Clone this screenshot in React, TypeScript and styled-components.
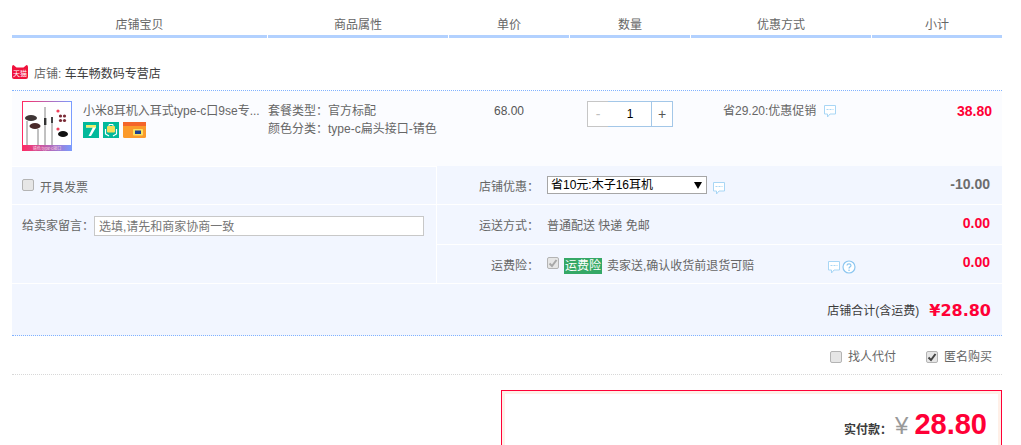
import React from "react";
import styled, { createGlobalStyle } from "styled-components";

const FONT = `"Liberation Sans", "Noto Sans CJK SC", sans-serif`;
const COLS = "255px 180px 120px 120px 180px 130px";
const COLON = "\uFF1A";

const Global = createGlobalStyle`
  html, body { margin: 0; padding: 0; background: #fff; overflow: hidden; }
  body { font: 12px/18px ${FONT}; color: #666; }
  * { box-sizing: border-box; }
`;

const Page = styled.div`
  width: 990px;
  height: 445px;
  margin-left: 12px;
  overflow: hidden;
`;

const HeaderRow = styled.div`
  display: grid;
  grid-template-columns: ${COLS};
  column-gap: 1px;
  height: 38px;
`;
const HeaderCell = styled.div`
  padding-top: 16px;
  height: 38px;
  text-align: center;
  border-bottom: 3px solid #b2d1ff;
`;

const ShopRow = styled.div`
  display: flex;
  align-items: center;
  height: 53px;
  padding-top: 27px;
  padding-bottom: 7px;
  border-bottom: 1px dotted #80b2ff;
`;
const ShopIcon = styled.svg`
  margin-bottom: 4px;
`;
const ShopLabel = styled.span`
  margin-left: 6px;
`;
const ShopName = styled.span`
  color: #3c3c3c;
`;

const ItemRow = styled.div`
  display: grid;
  grid-template-columns: ${COLS};
  column-gap: 1px;
  height: 75px;
  padding-top: 11px;
  background: #fbfcff;
`;
const ItemInfo = styled.div`
  display: flex;
  padding-left: 10px;
  column-gap: 11px;
`;
const ThumbArt = styled.svg`
  flex: none;
  margin-top: -1px;
`;
const ItemText = styled.div`
  width: 175px;
`;
const ItemTitle = styled.div`
  white-space: nowrap;
`;
const BadgeRow = styled.div`
  display: flex;
  gap: 4px;
  margin-top: 2px;
`;
const PropLine = styled.div`
  white-space: nowrap;
`;
const Price = styled.div`
  text-align: center;
  color: #555;
`;
const QtyCell = styled.div`
  display: flex;
  justify-content: center;
  margin-top: -1px;
`;
const QtyBtn = styled.button<{ $off?: boolean }>`
  width: 22px;
  height: 26px;
  padding: 0;
  font: 14px/22px ${FONT};
  background: #fff;
  border: 1px solid ${(p) => (p.$off ? "#c6c6c6" : "#a3c7e8")};
  color: ${(p) => (p.$off ? "#c0c0c0" : "#555")};
`;
const QtyInput = styled.input`
  width: 44px;
  height: 26px;
  padding: 0;
  margin: 0 -1px;
  text-align: center;
  font: 12px ${FONT};
  color: #000;
  background: #fff;
  border: 1px solid #a3c7e8;
  border-width: 1px 0;
  outline: none;
`;
const Promo = styled.div`
  display: flex;
  align-items: flex-start;
  gap: 2px;
  padding-left: 32px;
  white-space: nowrap;
`;
const Subtotal = styled.div`
  text-align: right;
  padding-right: 10px;
  font: bold 14px/18px ${FONT};
  color: #ff0036;
`;

const Extras = styled.div`
  display: grid;
  grid-template-columns: 424px 565px;
  column-gap: 1px;
  border-bottom: 1px solid #fff;
  height: 118px;
`;
const LeftCol = styled.div`
  display: flex;
  flex-direction: column;
  row-gap: 1px;
  padding-top: 1px;
`;
const InvoiceRow = styled.label`
  display: flex;
  align-items: flex-start;
  gap: 6px;
  height: 37px;
  padding: 12px 10px 0;
  background: #f2f6ff;
`;
const NoteRow = styled.div`
  display: flex;
  align-items: flex-start;
  flex: 1;
  padding: 11px 12px 0 10px;
  background: #f2f6ff;
`;
const NoteLabel = styled.span`
  width: 72px;
  line-height: 20px;
  white-space: nowrap;
`;
const NoteInput = styled.input`
  flex: 1;
  height: 20px;
  padding: 1px 4px 0;
  border: 1px solid #c8c8c8;
  background: #fff;
  font: 12px ${FONT};
  outline: none;
  &::placeholder { color: #757575; opacity: 1; }
`;
const RightCol = styled.div`
  display: flex;
  flex-direction: column;
  row-gap: 1px;
`;
const OptRow = styled.div`
  display: flex;
  align-items: center;
  flex: 1;
  padding-top: 4px;
  background: #f2f6ff;
`;
const OptLabel = styled.div`
  width: 102px;
  margin-right: 8px;
  text-align: right;
  flex: none;
`;
const Amount = styled.div<{ $muted?: boolean }>`
  margin-left: auto;
  padding: 0 12px 7px 0;
  font: bold 14px/18px ${FONT};
  color: ${(p) => (p.$muted ? "#6c6c6c" : "#ff0036")};
`;
const SelectWrap = styled.div`
  position: relative;
  width: 160px;
  height: 18px;
  margin-bottom: 4px;
`;
const Select = styled.select`
  appearance: none;
  display: block;
  width: 100%;
  height: 18px;
  padding: 0 3px;
  border: 1px solid #a6a6a6;
  border-radius: 0;
  background: #fff;
  color: #000;
  font: 12px ${FONT};
  outline: none;
`;
const SelectArrow = styled.svg`
  position: absolute;
  right: 5px;
  top: 6px;
  pointer-events: none;
`;
const BubbleGap = styled.span`
  display: inline-flex;
  margin-left: 5px;
  padding-top: 2px;
`;
const InsTag = styled.span`
  margin-left: 5px;
  padding: 0 1px;
  line-height: 16px;
  background: #35a866;
  color: #fff;
`;
const InsText = styled.span`
  margin-left: 5px;
  width: 220px;
  white-space: nowrap;
`;
const IconPair = styled.span`
  display: inline-flex;
  gap: 1px;
  padding-top: 2px;
`;

const SumRow = styled.div`
  display: flex;
  justify-content: flex-end;
  align-items: center;
  gap: 10px;
  height: 52px;
  padding: 2px 11px 0 0;
  background: #f2f6ff;
  border-bottom: 1px dotted #80b2ff;
  color: #3c3c3c;
`;
const SumValue = styled.span`
  font: bold 16px/20px "DejaVu Sans", "Liberation Sans", sans-serif;
  color: #ff0036;
`;
const OptionsRow = styled.div`
  display: flex;
  justify-content: flex-end;
  align-items: center;
  gap: 30px;
  height: 39px;
  padding: 3px 10px 0 0;
  border-bottom: 1px dotted #d8d8d8;
`;
const CheckLabel = styled.label`
  display: flex;
  align-items: center;
  gap: 6px;
`;
const CheckBox = styled.span<{ $faded?: boolean }>`
  display: inline-flex;
  align-items: center;
  justify-content: center;
  flex: none;
  width: 12px;
  height: 12px;
  border: 1px solid #b4b4b4;
  border-radius: 2px;
  background: #e6e6e6;
  color: ${(p) => (p.$faded ? "#a8a8a8" : "#444")};
`;
const InsCheck = styled(CheckBox)`
  margin-bottom: 5px;
`;

const TotalBox = styled.div`
  width: 501px;
  margin: 15px 0 0 auto;
  height: 110px;
  padding: 16px 14px 0 0;
  border: 1px solid #ff0036;
  box-shadow: inset 0 0 0 3px #fff0e8;
`;
const TotalLine = styled.div`
  display: flex;
  justify-content: flex-end;
  align-items: baseline;
  color: #3c3c3c;
  line-height: 30px;
  padding-top: 2px;
`;
const TotalLabel = styled.span`
  font-weight: bold;
`;
const TotalCurrency = styled.span`
  margin: 0 6px 0 3px;
  font: 24px/30px "Liberation Sans", sans-serif;
  color: #999;
`;
const TotalValue = styled.span`
  font: bold 29px/30px "Liberation Sans", sans-serif;
  color: #ff0036;
`;

const Check = () => (
  <svg width="10" height="10" viewBox="0 0 10 10">
    <path d="M1.5 5.5 L4 8 L8.5 2" fill="none" stroke="currentColor" strokeWidth="2" />
  </svg>
);

const Bubble = () => (
  <svg width="14" height="14" viewBox="0 0 14 14">
    <path d="M1.5 1.5 H12.5 V10 H7 L4.5 13 V10 H1.5 Z" fill="#fff" stroke="#a8d6f5" strokeWidth="1" />
    <path d="M3.5 5.5 H10.5" stroke="#a8d6f5" strokeWidth="1" strokeDasharray="2 1" />
  </svg>
);

const Help = () => (
  <svg width="14" height="14" viewBox="0 0 14 14">
    <circle cx="7" cy="7" r="6" fill="#fff" stroke="#8cc6f0" strokeWidth="1.2" />
    <path d="M5 5.4 C5 3.4 9 3.4 9 5.4 C9 6.8 7 6.8 7 8.6" fill="none" stroke="#8cc6f0" strokeWidth="1.2" />
    <rect x="6.4" y="9.6" width="1.3" height="1.4" fill="#8cc6f0" />
  </svg>
);

const TmallIcon = () => (
  <ShopIcon width="16" height="14" viewBox="0 0 16 14">
    <path d="M0 2 Q0 0 1.5 0 L4.5 2.5 H11.5 L14.5 0 Q16 0 16 2 V12 Q16 14 14 14 H2 Q0 14 0 12 Z" fill="#f0123c" />
    <text x="8" y="10.5" textAnchor="middle" fontSize="7" fill="#fff" fontFamily="Noto Sans CJK SC">天猫</text>
  </ShopIcon>
);

const Thumb = () => (
  <ThumbArt width="50" height="50" viewBox="0 0 50 50">
    <defs>
      <linearGradient id="edge" x1="0" x2="1" y1="0" y2="0">
        <stop offset="0" stopColor="#ff2a62" />
        <stop offset="1" stopColor="#7a9cff" />
      </linearGradient>
    </defs>
    <rect x="0.5" y="0.5" width="49" height="49" fill="#fff" stroke="url(#edge)" />
    <rect x="0" y="44" width="50" height="6" fill="url(#edge)" />
    <text x="25" y="49" textAnchor="middle" fontSize="4" fill="#ffd6e0" fontFamily="Noto Sans CJK SC">锖色 type-c接口</text>
    <path d="M23 6 V44 M30 22 V44 M5 20 V44 M16 28 V44" stroke="#666" strokeWidth="0.8" fill="none" />
    <rect x="22" y="17" width="2.4" height="7" fill="#333" />
    <path d="M29 16 H31 V22 H29 Z" fill="#444" />
    <ellipse cx="9" cy="17" rx="6" ry="3" fill="#3f3636" />
    <ellipse cx="13" cy="25" rx="5.5" ry="3" fill="#4a2a2a" />
    <circle cx="36" cy="10" r="1.6" fill="#f0405a" />
    <circle cx="38.5" cy="15" r="1.6" fill="#7a2a35" />
    <circle cx="42.5" cy="15" r="1.6" fill="#7a2a35" />
    <circle cx="38.5" cy="19.5" r="1.6" fill="#7a2a35" />
    <circle cx="42.5" cy="19.5" r="1.6" fill="#7a2a35" />
    <circle cx="36" cy="28" r="1.6" fill="#f0405a" />
    <ellipse cx="41" cy="33" rx="5" ry="3" fill="#111" />
  </ThumbArt>
);

const SevenBadge = () => (
  <svg width="16" height="16" viewBox="0 0 16 16">
    <rect width="16" height="16" fill="#02b99b" />
    <path d="M3 3 H13 V5.5 L8 14 H5.5 L9.8 5.5 H3 Z" fill="#fff" />
    <path d="M3 3 H13 V5.5 H3 Z" fill="#f2ee6a" />
  </svg>
);
const BagBadge = () => (
  <svg width="16" height="16" viewBox="0 0 16 16">
    <rect width="16" height="16" fill="#02b99b" />
    <rect x="4" y="4" width="8" height="6.5" rx="1" fill="#f6df5a" />
    <path d="M6 4 V2.5 H10 V4" stroke="#fff" strokeWidth="1" fill="none" />
    <path d="M2.5 7 V12 L6 14 M13.5 7 V12 L10 14" stroke="#fff" strokeWidth="1.2" fill="none" />
  </svg>
);
const CardBadge = () => (
  <svg width="23" height="16" viewBox="0 0 23 16">
    <rect width="23" height="16" rx="1.5" fill="#fb9a2b" />
    <rect width="23" height="4" fill="#f4652a" />
    <rect x="10" y="7" width="10" height="6.5" rx="1" fill="#f8e060" />
    <rect x="12" y="8.5" width="6" height="3.5" fill="#1b3f8f" />
  </svg>
);

export default function App() {
  return (
    <Page>
      <Global />
      <HeaderRow>
        {["店铺宝贝", "商品属性", "单价", "数量", "优惠方式", "小计"].map((t) => (
          <HeaderCell key={t}>{t}</HeaderCell>
        ))}
      </HeaderRow>

      <ShopRow>
        <TmallIcon />
        <ShopLabel>
          店铺: <ShopName>车车畅数码专营店</ShopName>
        </ShopLabel>
      </ShopRow>

      <ItemRow>
        <ItemInfo>
          <Thumb />
          <ItemText>
            <ItemTitle>小米8耳机入耳式type-c口9se专...</ItemTitle>
            <BadgeRow>
              <SevenBadge />
              <BagBadge />
              <CardBadge />
            </BadgeRow>
          </ItemText>
        </ItemInfo>
        <div>
          <PropLine>套餐类型{COLON}官方标配</PropLine>
          <PropLine>颜色分类{COLON}type-c扁头接口-锖色</PropLine>
        </div>
        <Price>68.00</Price>
        <QtyCell>
          <QtyBtn $off>-</QtyBtn>
          <QtyInput value="1" readOnly />
          <QtyBtn>+</QtyBtn>
        </QtyCell>
        <Promo>
          省29.20:优惠促销
          <BubbleGap>
            <Bubble />
          </BubbleGap>
        </Promo>
        <Subtotal>38.80</Subtotal>
      </ItemRow>

      <Extras>
        <LeftCol>
          <InvoiceRow>
            <CheckBox />
            开具发票
          </InvoiceRow>
          <NoteRow>
            <NoteLabel>给卖家留言{COLON}</NoteLabel>
            <NoteInput placeholder="选填,请先和商家协商一致" />
          </NoteRow>
        </LeftCol>
        <RightCol>
          <OptRow>
            <OptLabel>店铺优惠{COLON}</OptLabel>
            <SelectWrap>
              <Select defaultValue="a">
                <option value="a">省10元:木子16耳机</option>
              </Select>
              <SelectArrow width="8" height="7" viewBox="0 0 8 7">
                <path d="M0 0 H8 L4 7 Z" fill="#000" />
              </SelectArrow>
            </SelectWrap>
            <BubbleGap>
              <Bubble />
            </BubbleGap>
            <Amount $muted>-10.00</Amount>
          </OptRow>
          <OptRow>
            <OptLabel>运送方式{COLON}</OptLabel>
            普通配送 快递 免邮
            <Amount>0.00</Amount>
          </OptRow>
          <OptRow>
            <OptLabel>运费险{COLON}</OptLabel>
            <InsCheck $faded>
              <Check />
            </InsCheck>
            <InsTag>运费险</InsTag>
            <InsText>卖家送,确认收货前退货可赔</InsText>
            <IconPair>
              <Bubble />
              <Help />
            </IconPair>
            <Amount>0.00</Amount>
          </OptRow>
        </RightCol>
      </Extras>

      <SumRow>
        <span>店铺合计(含运费)</span>
        <SumValue>¥28.80</SumValue>
      </SumRow>

      <OptionsRow>
        <CheckLabel>
          <CheckBox />
          找人代付
        </CheckLabel>
        <CheckLabel>
          <CheckBox>
            <Check />
          </CheckBox>
          匿名购买
        </CheckLabel>
      </OptionsRow>

      <TotalBox>
        <TotalLine>
          <TotalLabel>实付款{COLON}</TotalLabel>
          <TotalCurrency>¥</TotalCurrency>
          <TotalValue>28.80</TotalValue>
        </TotalLine>
      </TotalBox>
    </Page>
  );
}
